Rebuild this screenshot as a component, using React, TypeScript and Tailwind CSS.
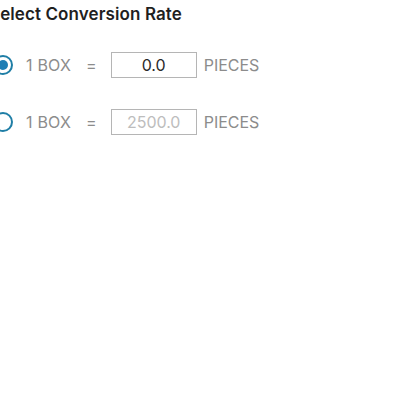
import { useState } from "react";

const rows = [
  { id: "a", value: "0.0", placeholder: false },
  { id: "b", value: "2500.0", placeholder: true },
];

export default function App() {
  const [selected, setSelected] = useState("a");

  return (
    <div className="w-[400px] h-[400px] bg-white overflow-hidden font-['Inter',sans-serif]">
      <div className="-ml-[11px] pt-[4px]">
        <h2 className="text-[17px] leading-[20px] font-semibold text-[#1f1f1f] tracking-[0.1px]">Select Conversion Rate</h2>
        <div className="mt-[28px] flex flex-col gap-[31px] pl-[4px]">
          {rows.map((r) => (
            <label key={r.id} className="flex items-center h-[26px] cursor-pointer" onClick={() => setSelected(r.id)}>
              <span className="w-[20px] h-[20px] rounded-full border-[2.5px] border-[#1f7ea6] flex items-center justify-center">
                {selected === r.id && <span className="w-[10px] h-[10px] rounded-full bg-[#1f7eb5]" />}
              </span>
              <span className="ml-[13px] text-[16px] text-[#8c8c8c] tracking-[0.2px]">1 BOX</span>
              <span className="ml-[15px] text-[16px] text-[#8c8c8c]">=</span>
              <div className="ml-[14px] w-[86px] h-[26px] border border-[#b5b5b5] flex items-center justify-center">
                <span className={"text-[16px] " + (r.placeholder ? "text-[#bdbdbd]" : "text-[#2a2a2a]")}>{r.value}</span>
              </div>
              <span className="ml-[7px] text-[16px] text-[#8c8c8c]">PIECES</span>
            </label>
          ))}
        </div>
      </div>
    </div>
  );
}
